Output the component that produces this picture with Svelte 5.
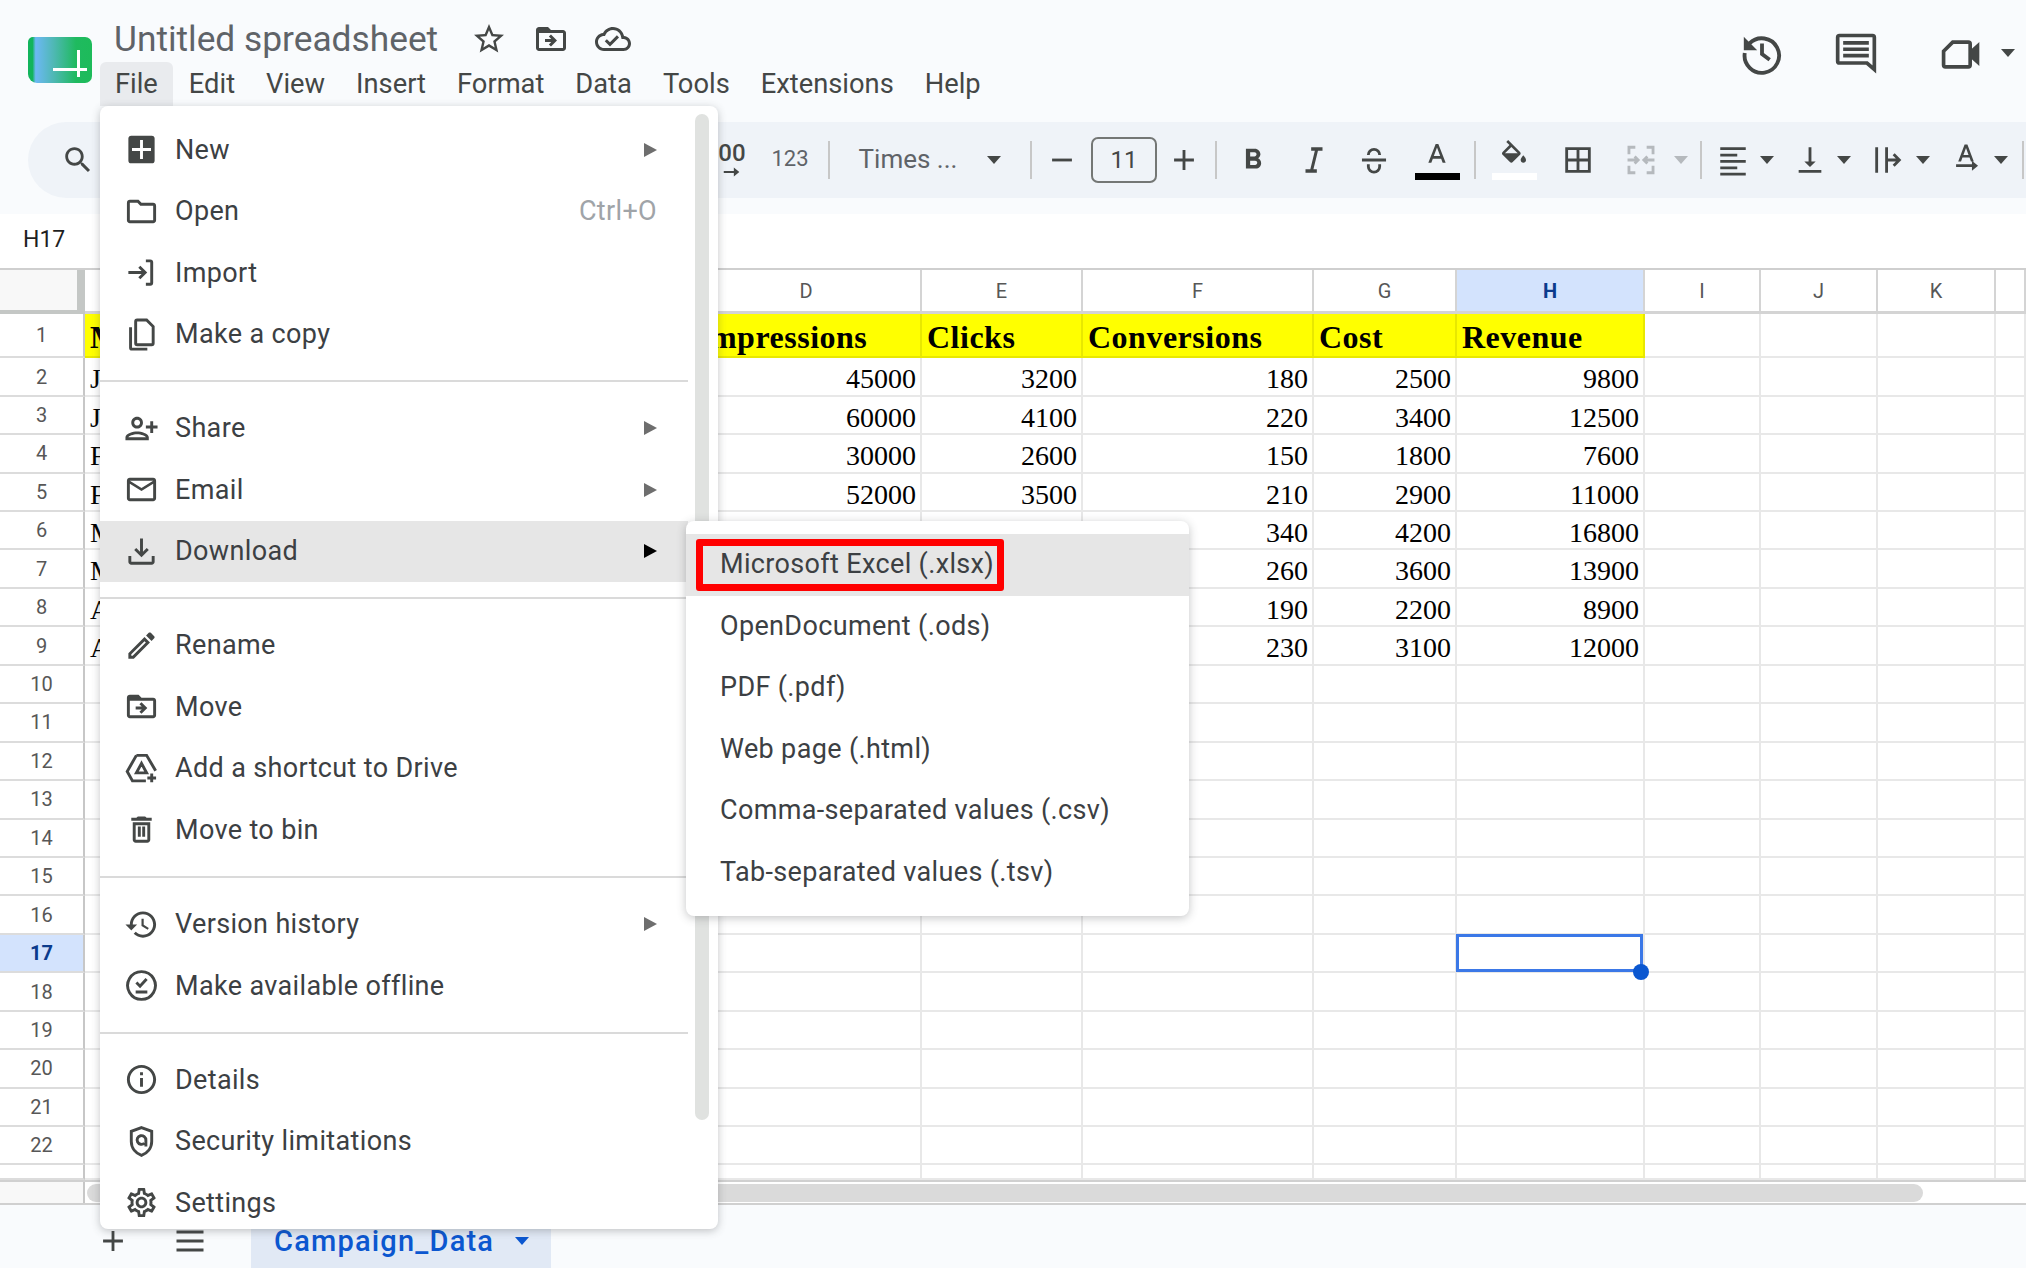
<script>
  const paths = {
    star: ['M22 9.24l-7.19-.62L12 2 9.19 8.63 2 9.24l5.46 4.73L5.82 21 12 17.27 18.18 21l-1.63-7.03L22 9.24zM12 15.4l-3.76 2.27 1-4.28-3.32-2.88 4.38-.38L12 6.1l1.71 4.04 4.38.38-3.32 2.88 1 4.28L12 15.4z'],
    move: ['M20 6h-8l-2-2H4c-1.1 0-2 .9-2 2v12c0 1.1.9 2 2 2h16c1.1 0 2-.9 2-2V8c0-1.1-.9-2-2-2zm0 12H4V8h16v10zm-8.01-9l-1.41 1.41L12.16 12H8v2h4.16l-1.59 1.59L11.99 17 16 13.01 11.99 9z'],
    cloud: ['M19.35 10.04C18.67 6.59 15.64 4 12 4 9.11 4 6.6 5.64 5.35 8.04 2.34 8.36 0 10.91 0 14c0 3.31 2.69 6 6 6h13c2.76 0 5-2.24 5-5 0-2.64-2.05-4.78-4.65-4.96zM19 18H6c-2.21 0-4-1.79-4-4 0-2.05 1.53-3.76 3.56-3.97l1.07-.11.5-.95C8.08 7.14 9.94 6 12 6c2.62 0 4.88 1.86 5.39 4.43l.3 1.5 1.53.11c1.56.1 2.78 1.41 2.78 2.96 0 1.65-1.35 3-3 3zm-9-3.82l-2.09-2.09L6.5 13.5 10 17l6.01-6.01-1.41-1.41z'],
    search: ['M15.5 14h-.79l-.28-.27C15.41 12.59 16 11.11 16 9.5 16 5.91 13.09 3 9.5 3S3 5.91 3 9.5 5.91 16 9.5 16c1.61 0 3.09-.59 4.23-1.57l.27.28v.79l5 4.99L20.49 19l-4.99-5zm-6 0C7.01 14 5 11.99 5 9.5S7.01 5 9.5 5 14 7.01 14 9.5 11.99 14 9.5 14z'],
    new: ['M5 2.500h14a2 2 0 0 1 2 2v15a2 2 0 0 1-2 2H5a2 2 0 0 1-2-2v-15a2 2 0 0 1 2-2zm6 3v5.500H5.500v2H11v5.500h2V13h5.500v-2H13V5.500z'],
    open: ['M9.17 6l2 2H20v10H4V6h5.17M10 4H4c-1.1 0-1.99.9-1.99 2L2 18c0 1.1.9 2 2 2h16c1.1 0 2-.9 2-2V8c0-1.1-.9-2-2-2h-8l-2-2z'],
    import: ['~M3 12h11M10.500 8l4 4-4 4M15 4h3a1 1 0 0 1 1 1v14a1 1 0 0 1-1 1h-3'],
    copy: ['~M9 2h6.500L20 6.500V18a1 1 0 0 1-1 1H9a1 1 0 0 1-1-1V3a1 1 0 0 1 1-1zM4.500 7v14a1 1 0 0 0 1 1H16'],
    share: ['M9 12c2.21 0 4-1.79 4-4s-1.79-4-4-4-4 1.79-4 4 1.79 4 4 4zm0-6c1.100 0 2 .9 2 2s-.9 2-2 2-2-.9-2-2 .9-2 2-2zm0 8c-2.67 0-8 1.34-8 4v2h16v-2c0-2.66-5.33-4-8-4zm-6 4c.2-.71 3.3-2 6-2s5.78 1.28 6 2H3zm17-3v-3h3v-2h-3V7h-2v3h-3v2h3v3h2z'],
    email: ['M20 4H4c-1.1 0-1.99.9-1.99 2L2 18c0 1.1.9 2 2 2h16c1.1 0 2-.9 2-2V6c0-1.1-.9-2-2-2zm0 14H4V8l8 5 8-5v10zm-8-7L4 6h16l-8 5z'],
    download: ['M19 15v4H5v-4H3v4c0 1.1.9 2 2 2h14c1.1 0 2-.9 2-2v-4h-2zm-7 1l5-5-1.41-1.41L13 12.17V3h-2v9.17L8.41 9.59 7 11l5 5z'],
    rename: ['M14.06 9.02l.92.92L5.92 19H5v-.92l9.06-9.06M17.66 3c-.25 0-.51.1-.7.29l-1.83 1.83 3.75 3.75 1.83-1.83c.39-.39.39-1.02 0-1.41l-2.34-2.34c-.2-.2-.45-.29-.71-.29zm-3.6 3.19L3 17.25V21h3.75L17.81 9.94l-3.75-3.75z'],
    drive: ['~M8.500 3h7l6.200 10.500M8.500 3L2.200 14l3.600 6.500H15M12 8.500L8.500 15h7zM19 15.500v6M16 18.500h6'],
    trash: ['M16 9v10H8V9h8m-1.500-6h-5l-1 1H5v2h14V4h-3.500l-1-1zM18 7H6v12c0 1.100.9 2 2 2h8c1.100 0 2-.9 2-2V7z', '~M10.500 10v7M13.500 10v7'],
    history: ['M13 3c-4.970 0-9 4.030-9 9H1l3.890 3.890.07.14L9 12H6c0-3.870 3.130-7 7-7s7 3.130 7 7-3.130 7-7 7c-1.930 0-3.680-.79-4.940-2.060l-1.420 1.420C8.270 19.990 10.510 21 13 21c4.970 0 9-4.030 9-9s-4.030-9-9-9zm-1 5v5l4.280 2.540.72-1.210-3.500-2.080V8H12z'],
    offline: ['~M12 2.500a9.500 9.500 0 1 0 .01 0zM8.500 10l2.500 2.500 4.500-5M8 16.500h8'],
    info: ['M11 7h2v2h-2zm0 4h2v6h-2zm1-9C6.480 2 2 6.480 2 12s4.480 10 10 10 10-4.480 10-10S17.520 2 12 2zm0 18c-4.410 0-8-3.590-8-8s3.590-8 8-8 8 3.590 8 8-3.590 8-8 8z'],
    shield: ['~M12 2.500l7 2.500v7c0 4.500-3 8-7 9.500-4-1.500-7-5-7-9.500V5zM15 15.500v-4.500a3 3 0 1 0-1 2.200'],
    settings: ['M19.43 12.98c.04-.32.07-.64.07-.98 0-.34-.03-.66-.07-.98l2.11-1.65c.19-.15.24-.42.12-.64l-2-3.46c-.09-.16-.26-.25-.44-.25-.06 0-.12.01-.17.03l-2.49 1c-.52-.4-1.08-.73-1.69-.98l-.38-2.65C14.46 2.18 14.25 2 14 2h-4c-.25 0-.46.18-.49.42l-.38 2.65c-.61.25-1.17.59-1.69.98l-2.49-1c-.06-.02-.12-.03-.18-.03-.17 0-.34.09-.43.25l-2 3.46c-.13.22-.07.49.12.64l2.11 1.65c-.04.32-.07.65-.07.98 0 .33.03.66.07.98l-2.11 1.65c-.19.15-.24.42-.12.64l2 3.46c.09.16.26.25.44.25.06 0 .12-.01.17-.03l2.49-1c.52.4 1.08.73 1.69.98l.38 2.65c.03.24.24.42.49.42h4c.25 0 .46-.18.49-.42l.38-2.65c.61-.25 1.17-.59 1.69-.98l2.49 1c.06.02.12.03.18.03.17 0 .34-.09.43-.25l2-3.46c.12-.22.07-.49-.12-.64l-2.11-1.65zm-1.98-1.71c.04.31.05.52.05.73 0 .21-.02.43-.05.73l-.14 1.13.89.7 1.08.84-.7 1.21-1.27-.51-1.04-.42-.9.68c-.43.32-.84.56-1.25.73l-1.06.43-.16 1.13-.2 1.35h-1.4l-.19-1.35-.16-1.13-1.06-.43c-.43-.18-.83-.41-1.23-.71l-.91-.7-1.06.43-1.27.51-.7-1.21 1.08-.84.89-.7-.14-1.13c-.03-.31-.05-.54-.05-.74s.02-.43.05-.73l.14-1.13-.89-.7-1.08-.84.7-1.21 1.27.51 1.04.42.9-.68c.43-.32.84-.56 1.25-.73l1.06-.43.16-1.13.2-1.35h1.39l.19 1.35.16 1.13 1.06.43c.43.18.83.41 1.23.71l.91.7 1.06-.43 1.27-.51.7 1.21-1.07.85-.89.7.14 1.13zM12 8c-2.21 0-4 1.79-4 4s1.79 4 4 4 4-1.79 4-4-1.79-4-4-4zm0 6c-1.1 0-2-.9-2-2s.9-2 2-2 2 .9 2 2-.9 2-2 2z'],
    restore: ['~M5.500 7A9 9 0 1 1 3 12M12 7v5.500l4 3', 'M2.500 3.500v7h7z'],
    comment: ['~M3 3h18a1 1 0 0 1 1 1v17.500L18 18H3a1 1 0 0 1-1-1V4a1 1 0 0 1 1-1z', 'M5 6h14v2H5zM5 9.500h14v2H5zM5 13h14v2H5z'],
    video: ['~M7.500 5.500H16a1 1 0 0 1 1 1V18a1 1 0 0 1-1 1H3.500a1 1 0 0 1-1-1V10.500z', 'M17 10l5-4.500v13L17 14z'],
    plus: ['M19 13h-6v6h-2v-6H5v-2h6V5h2v6h6v2z'],
    minus: ['M5 11h14v2H5z'],
    bars: ['M3 5h18v2H3zM3 11h18v2H3zM3 17h18v2H3z'],
    bold: ['M15.6 10.79c.97-.67 1.65-1.77 1.65-2.79 0-2.26-1.75-4-4-4H7v14h7.04c2.09 0 3.71-1.7 3.71-3.79 0-1.52-.86-2.82-2.15-3.42zM10 6.500h3c.83 0 1.500.67 1.500 1.500s-.67 1.500-1.500 1.500h-3v-3zm3.500 9H10v-3h3.500c.83 0 1.500.67 1.500 1.500s-.67 1.500-1.500 1.500z'],
    italic: ['M10 3v2.500h2.600L9.400 18.500H6V21h8v-2.500h-2.400l3.200-13H18V3z'],
    strike: ['~M8 8.500a4 4 0 0 1 8 0M3.500 12h17M8 15v1.500a4 4 0 0 0 8 0V15'],
    textA: ['M11 3L5.500 17h2.250l1.120-3h6.250l1.120 3h2.250L13 3h-2zm-1.380 9L12 5.670 14.380 12H9.620z'],
    fill: ['M16.56 8.94L7.62 0 6.21 1.41l2.38 2.38-5.15 5.15c-.59.59-.59 1.54 0 2.12l5.500 5.500c.29.29.68.44 1.060.44s.77-.15 1.060-.44l5.500-5.500c.59-.58.59-1.530 0-2.120zM5.210 10L10 5.210 14.790 10H5.210zM19 11.500s-2 2.170-2 3.500c0 1.100.9 2 2 2s2-.9 2-2c0-1.330-2-3.500-2-3.500z'],
    borders: ['M3 3v18h18V3H3zm8 16H5v-6h6v6zm0-8H5V5h6v6zm8 8h-6v-6h6v6zm0-8h-6V5h6v6z'],
    merge: ['~M8 3H3.500v5M3.500 11v2M3.500 16v5H8M16 3h4.500v5M20.500 11v2M20.500 16v5H16M3.500 12H10M7.500 9.500l2.500 2.500-2.500 2.500M20.500 12H14M16.500 9.500L14 12l2.500 2.500'],
    align: ['M3 3h18v2H3zM3 7.500h12v2H3zM3 12h18v2H3zM3 16.500h12v2H3zM3 21h18v2H3z'],
    valign: ['M16 13h-3V3h-2v10H8l4 4 4-4zM4 19v2h16v-2H4z'],
    wrap: ['~M4 3v18M11 3v18M11 12h9M16 8l4 4-4 4'],
    rotate: ['M11 1L6.500 13h2l1-2.700h5l1 2.700h2L13 1h-2zm-.8 7.500L12 3.500l1.800 5h-3.600z', 'M5 15h11.200v-2.500L20.500 16l-4.300 3.500V17H5z'],
    arrow: ['M3 11h11V7l6 5-6 5v-4H3z']
  };

  const menuGroups = [
    [
      { label: 'New', icon: 'new', arrow: true },
      { label: 'Open', icon: 'open', hint: 'Ctrl+O' },
      { label: 'Import', icon: 'import' },
      { label: 'Make a copy', icon: 'copy' }
    ],
    [
      { label: 'Share', icon: 'share', arrow: true },
      { label: 'Email', icon: 'email', arrow: true },
      { label: 'Download', icon: 'download', arrow: true, active: true }
    ],
    [
      { label: 'Rename', icon: 'rename' },
      { label: 'Move', icon: 'move' },
      { label: 'Add a shortcut to Drive', icon: 'drive' },
      { label: 'Move to bin', icon: 'trash' }
    ],
    [
      { label: 'Version history', icon: 'history', arrow: true },
      { label: 'Make available offline', icon: 'offline' }
    ],
    [
      { label: 'Details', icon: 'info' },
      { label: 'Security limitations', icon: 'shield' },
      { label: 'Settings', icon: 'settings' }
    ]
  ];

  const formats = [
    'Microsoft Excel (.xlsx)',
    'OpenDocument (.ods)',
    'PDF (.pdf)',
    'Web page (.html)',
    'Comma-separated values (.csv)',
    'Tab-separated values (.tsv)'
  ];

  const menuBar = ['File', 'Edit', 'View', 'Insert', 'Format', 'Data', 'Tools', 'Extensions', 'Help'];

  // c = centre x on the page, w = width of the slot
  const rawTools = [
    { c: 78, w: 40, icon: 'search' },
    { c: 732, w: 30, kind: 'dec' },
    { c: 790, w: 44, kind: 'num' },
    { c: 829, w: 2, kind: 'sep' },
    { c: 908, w: 104, kind: 'font' },
    { c: 994, w: 18, kind: 'caret' },
    { c: 1031, w: 2, kind: 'sep' },
    { c: 1062, w: 34, icon: 'minus' },
    { c: 1124, w: 66, kind: 'size' },
    { c: 1184, w: 36, icon: 'plus' },
    { c: 1216, w: 2, kind: 'sep' },
    { c: 1253, w: 36, icon: 'bold' },
    { c: 1314, w: 36, icon: 'italic' },
    { c: 1374, w: 36, icon: 'strike' },
    { c: 1437, w: 46, kind: 'color' },
    { c: 1475, w: 2, kind: 'sep' },
    { c: 1514, w: 46, kind: 'fill' },
    { c: 1578, w: 36, icon: 'borders' },
    { c: 1641, w: 36, icon: 'merge', muted: true },
    { c: 1681, w: 18, kind: 'caret', muted: true },
    { c: 1701, w: 2, kind: 'sep' },
    { c: 1733, w: 32, icon: 'align' },
    { c: 1767, w: 18, kind: 'caret' },
    { c: 1810, w: 34, icon: 'valign' },
    { c: 1844, w: 18, kind: 'caret' },
    { c: 1888, w: 34, icon: 'wrap' },
    { c: 1923, w: 18, kind: 'caret' },
    { c: 1966, w: 34, icon: 'rotate' },
    { c: 2001, w: 18, kind: 'caret' },
    { c: 2023, w: 2, kind: 'sep' }
  ];

  let right = 28;
  const tools = rawTools.map((t) => {
    const gap = t.c - t.w / 2 - right;
    right = t.c + t.w / 2;
    return { ...t, gap };
  });

  const colWidths = [216, 200, 191, 230, 161, 231, 143, 188, 116, 117, 118, 30];
  const columns = ['A', 'B', 'C', 'D', 'E', 'F', 'G', 'H', 'I', 'J', 'K', ''];
  const gridCols = '85px ' + colWidths.map((w) => w + 'px').join(' ');

  const header = ['Month', '', '', 'Impressions', 'Clicks', 'Conversions', 'Cost', 'Revenue'];
  const data = [
    ['Jan', 45000, 3200, 180, 2500, 9800],
    ['Jan', 60000, 4100, 220, 3400, 12500],
    ['Feb', 30000, 2600, 150, 1800, 7600],
    ['Feb', 52000, 3500, 210, 2900, 11000],
    ['Mar', '', '', 340, 4200, 16800],
    ['Mar', '', '', 260, 3600, 13900],
    ['Apr', '', '', 190, 2200, 8900],
    ['Apr', '', '', 230, 3100, 12000]
  ];
  const emptyRows = Array.from({ length: 14 }, (_, i) => i + 10);
</script>

{#snippet icon(name, cls = '')}
  <svg class="ico {cls}" viewBox="0 0 24 24" aria-hidden="true">
    {#each paths[name] as d}
      {#if d.startsWith('~')}
        <path class="line" d={d.slice(1)} />
      {:else}
        <path d={d} />
      {/if}
    {/each}
  </svg>
{/snippet}

<div class="app">
  <header class="head">
    <div class="topbar">
      <div class="logo"><span class="logo-h"></span><span class="logo-v"></span></div>
      <div class="titles">
        <div class="title-row">
          <span class="title">Untitled spreadsheet</span>
          {@render icon('star', 'title-ico')}
          {@render icon('move', 'title-ico')}
          {@render icon('cloud', 'title-ico')}
        </div>
        <nav class="menubar">
          {#each menuBar as m, i}
            <span class="mb-item" class:open={i === 0}>{m}</span>
          {/each}
        </nav>
      </div>
      <div class="top-right">
        {@render icon('restore', 'tr-history')}
        {@render icon('comment', 'tr-comment')}
        {@render icon('video', 'tr-video')}
        <span class="caret tr-caret"></span>
      </div>
    </div>
    <div class="toolbar">
      {#each tools as t}
        <div class="tool" class:muted={t.muted} style="width:{t.w}px;margin-left:{t.gap}px">
          {#if t.icon}
            {@render icon(t.icon, 'tool-ico')}
          {:else if t.kind === 'sep'}
            <span class="tsep"></span>
          {:else if t.kind === 'caret'}
            <span class="caret"></span>
          {:else if t.kind === 'num'}
            <span class="tnum">123</span>
          {:else if t.kind === 'dec'}
            <span class="tdec">00{@render icon('arrow', 'dec-ico')}</span>
          {:else if t.kind === 'font'}
            <span class="tfont">Times ...</span>
          {:else if t.kind === 'size'}
            <span class="tsize">11</span>
          {:else if t.kind === 'color'}
            <span class="swatch-tool">
              {@render icon('textA', 'a-ico')}
              <span class="swatch black"></span>
            </span>
          {:else if t.kind === 'fill'}
            <span class="swatch-tool">
              {@render icon('fill', 'a-ico')}
              <span class="swatch white"></span>
            </span>
          {/if}
        </div>
      {/each}
    </div>
  </header>

  <div class="namebox"><span>H17</span></div>

  <div class="sheet" style="grid-template-columns:{gridCols}">
    <div class="corner"></div>
    {#each columns as c}
      <div class="col-head" class:sel={c === 'H'}>{c}</div>
    {/each}

    <div class="row-head">1</div>
    {#each columns as _, i}
      <div class="cell" class:yellow={i < 8}>
        {#if header[i]}<span class="hcell">{header[i]}</span>{/if}
      </div>
    {/each}

    {#each data as row, r}
      <div class="row-head">{r + 2}</div>
      <div class="cell text">{row[0]}</div>
      <div class="cell"></div>
      <div class="cell"></div>
      {#each row.slice(1) as v}
        <div class="cell num">{v}</div>
      {/each}
      <div class="cell"></div>
      <div class="cell"></div>
      <div class="cell"></div>
      <div class="cell"></div>
    {/each}

    {#each emptyRows as n}
      <div class="row-head" class:sel={n === 17}>{n <= 22 ? n : ''}</div>
      {#each columns as c}
        <div class="cell">
          {#if n === 17 && c === 'H'}
            <div class="selection"><span class="handle"></span></div>
          {/if}
        </div>
      {/each}
    {/each}
  </div>

  <div class="hscroll">
    <div class="hs-corner"></div>
    <div class="hs-thumb"></div>
  </div>

  <footer class="tabs">
    {@render icon('plus', 'tab-plus')}
    {@render icon('bars', 'tab-bars')}
    <div class="tab"><span>Campaign_Data</span><span class="caret blue"></span></div>
  </footer>

  <div class="menu">
    <div class="menu-scroll"></div>
    {#each menuGroups as group, g}
      {#if g > 0}<div class="menu-sep"></div>{/if}
      {#each group as item}
        <div class="menu-item" class:active={item.active}>
          {@render icon(item.icon, 'menu-ico')}
          <span class="menu-label">{item.label}</span>
          {#if item.hint}<span class="menu-hint">{item.hint}</span>{/if}
          {#if item.arrow}<span class="menu-arrow"></span>{/if}
        </div>
      {/each}
    {/each}
  </div>

  <div class="submenu">
    {#each formats as f, i}
      <div class="sub-item" class:active={i === 0}>{f}</div>
    {/each}
    <div class="redbox"></div>
  </div>
</div>

<style>
  :global(body) {
    margin: 0;
    background: #fff;
  }

  .app {
    position: relative;
    width: 2026px;
    height: 1268px;
    overflow: hidden;
    display: flex;
    flex-direction: column;
    font-family: Roboto, "Liberation Sans", sans-serif;
    color: #444746;
  }

  .ico {
    display: block;
    fill: currentColor;
    flex: none;
  }

  .line {
    fill: none;
    stroke: currentColor;
    stroke-width: 2;
  }

  .head {
    height: 214px;
    background: #f9fbfd;
    flex: none;
  }

  .topbar {
    height: 122px;
    display: flex;
    position: relative;
  }

  .logo {
    position: relative;
    width: 64px;
    height: 46px;
    margin: 37px 0 0 28px;
    border-radius: 5px 7px 7px 9px;
    background: linear-gradient(90deg, #12b45c 0, #12b45c 7%, #6cb8f4 12%, #4fb8b4 40%, #1fba5f 75%, #1dbb5a 100%);
  }

  .logo-h {
    position: absolute;
    left: 25px;
    top: 31px;
    width: 34px;
    height: 3px;
    background: #fff;
  }

  .logo-v {
    position: absolute;
    left: 49px;
    top: 13px;
    width: 3px;
    height: 27px;
    background: #fff;
  }

  .titles {
    margin-left: 8px;
    display: flex;
    flex-direction: column;
  }

  .title-row {
    display: flex;
    align-items: center;
    height: 62px;
    padding-left: 14px;
    padding-top: 16px;
    box-sizing: border-box;
  }

  .title {
    font-size: 35.3px;
    color: #5f6368;
    width: 357px;
    white-space: nowrap;
  }

  :global(.title-ico) {
    width: 36px;
    height: 36px;
    margin-right: 26px;
    color: #444746;
  }

  .menubar {
    display: flex;
    height: 44px;
    align-items: center;
    font-size: 27.3px;
    color: #444746;
  }

  .mb-item {
    padding: 0 15px;
    height: 44px;
    line-height: 44px;
    margin-right: 1px;
    white-space: nowrap;
  }

  .mb-item.open {
    background: #e9ebee;
    border-radius: 6px 6px 0 0;
  }

  .top-right {
    position: absolute;
    right: 0;
    top: 0;
    height: 110px;
    width: 300px;
  }

  :global(.tr-history) {
    position: absolute;
    left: 13px;
    top: 30px;
    width: 46px;
    height: 46px;
  }

  :global(.tr-comment) {
    position: absolute;
    left: 108px;
    top: 30px;
    width: 44px;
    height: 44px;
  }

  :global(.tr-video) {
    position: absolute;
    left: 213px;
    top: 32px;
    width: 44px;
    height: 44px;
  }

  .tr-caret {
    position: absolute;
    left: 275px;
    top: 49px;
  }

  .toolbar {
    height: 76px;
    margin-left: 28px;
    background: #eff3f8;
    border-radius: 38px 0 0 38px;
    display: flex;
    align-items: center;
  }

  .tool {
    flex: none;
    display: flex;
    align-items: center;
    justify-content: center;
    color: #444746;
  }

  .tool.muted {
    color: #b5b9bd;
  }

  :global(.tool-ico) {
    width: 34px;
    height: 34px;
  }

  .tsep {
    width: 2px;
    height: 38px;
    background: #c7c7c7;
  }

  .caret {
    display: inline-block;
    width: 0;
    height: 0;
    border-left: 7px solid transparent;
    border-right: 7px solid transparent;
    border-top: 8px solid currentColor;
    color: #444746;
  }

  .muted .caret {
    color: #b5b9bd;
  }

  .caret.blue {
    color: #0b57d0;
  }

  .tnum {
    font-size: 22px;
    color: #5f6368;
    margin-top: -3px;
  }

  .tdec {
    display: flex;
    flex-direction: column;
    align-items: center;
    font-size: 24px;
    line-height: 22px;
    font-weight: 500;
    margin-top: 4px;
  }

  :global(.dec-ico) {
    width: 22px;
    height: 22px;
    margin-top: -3px;
  }

  .tfont {
    font-size: 26px;
    color: #5f6368;
    white-space: nowrap;
    margin-top: -3px;
  }

  .tsize {
    width: 62px;
    height: 42px;
    border: 2px solid #747775;
    border-radius: 7px;
    text-align: center;
    line-height: 42px;
    font-size: 24px;
  }

  .swatch-tool {
    display: flex;
    flex-direction: column;
    align-items: center;
    gap: 1px;
  }

  :global(.a-ico) {
    width: 32px;
    height: 32px;
  }

  .swatch {
    width: 45px;
    height: 7px;
  }

  .swatch.black {
    background: #000;
  }

  .swatch.white {
    background: #fff;
  }

  .namebox {
    height: 54px;
    line-height: 52px;
    padding-left: 23px;
    font-size: 23px;
    color: #1f1f1f;
    background: #fff;
    flex: none;
    box-sizing: border-box;
  }

  .sheet {
    flex: none;
    height: 912px;
    overflow: hidden;
    display: grid;
    grid-template-rows: 44.3px 44px repeat(21, 38.45px);
    border-top: 2px solid #cfcfcf;
    box-sizing: border-box;
    background: #fff;
  }

  .corner {
    background: #f8f8f8;
    border-right: 8px solid #c4c7c5;
    border-bottom: 4px solid #c4c7c5;
    box-sizing: border-box;
  }

  .col-head {
    display: flex;
    align-items: center;
    justify-content: center;
    font-size: 20px;
    color: #575757;
    border-right: 2px solid #d4d4d4;
    border-bottom: 3px solid #d4d4d4;
    box-sizing: border-box;
  }

  .col-head.sel {
    background: #d3e3fd;
    color: #0b3b8c;
    font-weight: 700;
  }

  .row-head {
    display: flex;
    align-items: center;
    justify-content: center;
    font-size: 20px;
    color: #575757;
    border-right: 2px solid #c7c7c7;
    border-bottom: 2px solid #dcdcdc;
    box-sizing: border-box;
  }

  .row-head.sel {
    background: #d3e3fd;
    color: #0b3b8c;
    font-weight: 700;
  }

  .cell {
    position: relative;
    border-right: 2px solid #e8e8e8;
    border-bottom: 2px solid #e8e8e8;
    box-sizing: border-box;
    font-family: "Liberation Serif", serif;
    font-size: 28px;
    color: #000;
    white-space: nowrap;
    overflow: hidden;
    line-height: 42px;
  }

  .cell:has(.selection) {
    overflow: visible;
    z-index: 2;
  }

  .cell.yellow {
    background: #ffff00;
    border-color: #e8e800;
  }

  .hcell {
    display: block;
    font-weight: 700;
    font-size: 32px;
    letter-spacing: 0.5px;
    line-height: 46px;
    padding-left: 5px;
  }

  .cell.num {
    text-align: right;
    padding-right: 4px;
  }

  .cell.text {
    padding-left: 5px;
  }

  .selection {
    position: absolute;
    inset: -1px 0 -1px -1px;
    border: 3px solid #3b78e7;
  }

  .handle {
    position: absolute;
    right: -9px;
    bottom: -11px;
    width: 16px;
    height: 16px;
    border-radius: 50%;
    background: #0b57d0;
  }

  .hscroll {
    flex: none;
    height: 25px;
    display: flex;
    align-items: center;
    background: #fff;
    border-top: 2px solid #d0d0d0;
    border-bottom: 2px solid #d0d0d0;
    box-sizing: border-box;
  }

  .hs-corner {
    width: 85px;
    height: 100%;
    background: #f8f8f8;
    border-right: 2px solid #c7c7c7;
    box-sizing: border-box;
  }

  .hs-thumb {
    width: 1836px;
    height: 18px;
    margin-left: 2px;
    border-radius: 9px;
    background: #dadada;
  }

  .tabs {
    flex: 1;
    background: #f9fbfd;
    display: flex;
    align-items: center;
    position: relative;
  }

  :global(.tab-plus) {
    width: 34px;
    height: 34px;
    margin: 8px 0 0 96px;
  }

  :global(.tab-bars) {
    width: 36px;
    height: 36px;
    margin: 8px 0 0 42px;
  }

  .tab {
    margin-left: 43px;
    width: 300px;
    height: 100%;
    box-sizing: border-box;
    padding: 8px 0 0 23px;
    background: #e1e9f5;
    display: flex;
    align-items: center;
    gap: 21px;
    color: #0b57d0;
    font-size: 29px;
    font-weight: 500;
    letter-spacing: 1.2px;
  }

  .menu {
    position: absolute;
    left: 100px;
    top: 106px;
    width: 618px;
    height: 1123px;
    box-sizing: border-box;
    padding-top: 13px;
    background: #fff;
    border-radius: 8px;
    box-shadow: 0 2px 8px rgba(60, 64, 67, 0.3);
    overflow: hidden;
    z-index: 5;
  }

  .menu-scroll {
    position: absolute;
    left: 595px;
    top: 8px;
    width: 14px;
    height: 1006px;
    border-radius: 7px;
    background: #e0e2e0;
  }

  .menu-item {
    height: 61.5px;
    width: 588px;
    display: flex;
    align-items: center;
    padding-left: 24px;
    padding-right: 31px;
    box-sizing: border-box;
    font-size: 27px;
    letter-spacing: 0.35px;
    color: #3c4043;
  }

  .menu-item.active {
    background: #e6e6e6;
  }

  :global(.menu-ico) {
    width: 35px;
    height: 35px;
    color: #444746;
    margin-right: 16px;
  }

  .menu-label {
    flex: 1;
    white-space: nowrap;
  }

  .menu-hint {
    color: #a0a4a8;
  }

  .menu-arrow {
    width: 0;
    height: 0;
    border-left: 13px solid #6e6e6e;
    border-top: 7px solid transparent;
    border-bottom: 7px solid transparent;
  }

  .active .menu-arrow {
    border-left-color: #000;
  }

  .menu-sep {
    height: 2px;
    width: 588px;
    margin: 15.3px 0;
    background: #dadada;
  }

  .submenu {
    position: absolute;
    left: 686px;
    top: 521px;
    width: 503px;
    height: 395px;
    box-sizing: border-box;
    padding-top: 13px;
    background: #fff;
    border-radius: 8px;
    box-shadow: 0 2px 10px rgba(60, 64, 67, 0.3);
    z-index: 6;
    overflow: hidden;
  }

  .sub-item {
    height: 61.6px;
    line-height: 61px;
    padding-left: 34px;
    font-size: 27px;
    letter-spacing: 0.35px;
    color: #3c4043;
    white-space: nowrap;
  }

  .sub-item.active {
    background: #e6e6e6;
  }

  .redbox {
    position: absolute;
    left: 10px;
    top: 18px;
    width: 308px;
    height: 52px;
    border: 7px solid #ff0000;
    border-radius: 3px;
    box-sizing: border-box;
  }
</style>
